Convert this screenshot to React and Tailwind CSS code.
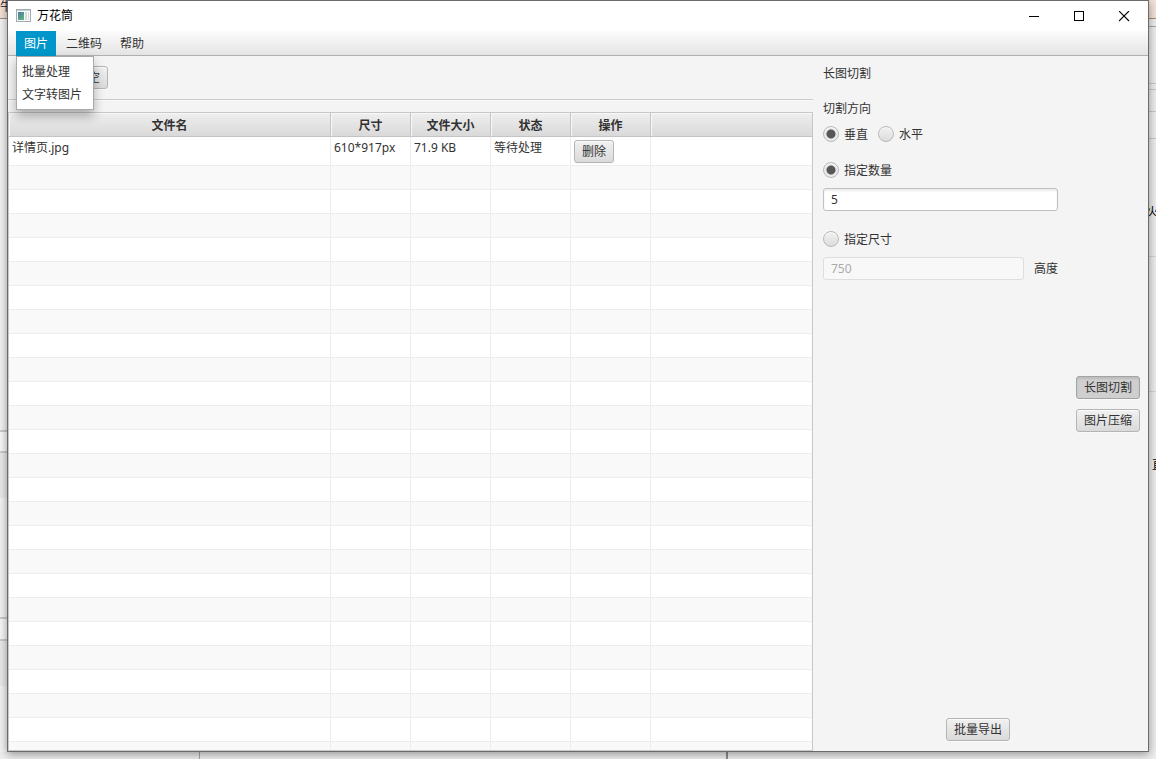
import { useState } from "react";

const btn =
  "h-[23px] rounded-[3px] border border-[#b5b5b5] bg-linear-to-b from-[#f1f1f1] to-[#dadada] px-[7px] text-[12px] leading-[21px] text-[#323232] shadow-[inset_0_1px_0_#fbfbfb,0_1px_0_#fafafa] whitespace-nowrap";
const pressed =
  "h-[23px] rounded-[3px] border border-[#a3a3a3] bg-[#cfcfcf] px-[7px] text-[12px] leading-[21px] text-[#323232] shadow-[inset_0_2px_2px_#bdbdbd,0_1px_0_#fafafa] whitespace-nowrap";
const radio =
  "size-4 shrink-0 appearance-none rounded-full border border-[#b9b9b9] bg-linear-to-b from-[#f2f2f2] to-[#dcdcdc] shadow-[inset_0_1px_0_#fafafa] checked:bg-[radial-gradient(circle,#575757_0_4px,#e9e9e9_5px)]";
const radioLabel = "flex h-4 items-center gap-[5px] leading-4";
const cell = "border-r border-b border-[#ededed] p-0 pt-[2px] pl-[3px] align-top";

const columns = ["文件名", "尺寸", "文件大小", "状态", "操作", ""];
const files = [{ name: "详情页.jpg", size: "610*917px", bytes: "71.9 KB", state: "等待处理" }];
const blankRows = Array.from({ length: 25 }, (_, i) => i);

function TitleBar() {
  return (
    <header className="flex h-[30px] shrink-0 items-center bg-white pr-px pl-2">
      <svg width="16" height="14" viewBox="0 0 16 14" aria-hidden="true">
        <defs>
          <linearGradient id="pane" x1="0" y1="0" x2="0.6" y2="1">
            <stop offset="0" stopColor="#4a78a8" />
            <stop offset="1" stopColor="#5fae80" />
          </linearGradient>
        </defs>
        <rect x="0.5" y="0.5" width="14" height="12" fill="#fafbfb" stroke="#a3abb0" />
        <rect x="1" y="1" width="13" height="1" fill="#c9d1d5" />
        <rect x="2" y="3" width="6" height="8" fill="url(#pane)" />
        <rect x="9" y="3" width="2" height="8" fill="#d5dddd" />
        <rect x="12" y="3" width="1" height="8" fill="#d5dddd" />
      </svg>
      <h1 className="ml-[5px] flex-1 text-[12px] text-black">万花筒</h1>
      <button aria-label="Minimize" className="flex h-full w-[45px] items-center justify-center">
        <svg width="11" height="11" viewBox="0 0 11 11" shapeRendering="crispEdges"><path d="M0 5.5h10" stroke="#000" /></svg>
      </button>
      <button aria-label="Maximize" className="flex h-full w-[45px] items-center justify-center">
        <svg width="11" height="11" viewBox="0 0 11 11" shapeRendering="crispEdges"><rect x="0.5" y="0.5" width="9" height="9" fill="none" stroke="#000" /></svg>
      </button>
      <button aria-label="Close" className="flex h-full w-[45px] items-center justify-center">
        <svg width="11" height="11" viewBox="0 0 11 11"><path d="M0 0l10 10M10 0L0 10" stroke="#000" strokeWidth="1.1" /></svg>
      </button>
    </header>
  );
}

function MenuBar() {
  return (
    <nav className="flex h-[25px] shrink-0 border-b border-[#b0b0b0] bg-linear-to-b from-[#fcfcfc] to-[#e4e4e4] pl-2">
      <div className="relative">
        <button className="h-[25px] bg-[#0096c9] px-2 text-white">图片</button>
        <ul className="absolute top-[25px] left-0 z-10 h-[54px] w-[78px] border border-[#a9a9a9] bg-white pt-[3px] text-[#323232] shadow-[0_6px_10px_rgba(0,0,0,0.3)]">
          <li><button className="h-[23px] w-full pl-[5px] text-left whitespace-nowrap">批量处理</button></li>
          <li><button className="h-[23px] w-full pl-[5px] text-left whitespace-nowrap">文字转图片</button></li>
        </ul>
      </div>
      <button className="ml-[2px] h-[25px] px-2">二维码</button>
      <button className="ml-[2px] h-[25px] px-2">帮助</button>
    </nav>
  );
}

function FileTable() {
  return (
    <div className="min-h-0 flex-1 overflow-hidden border border-[#c8c8c8] bg-white">
      <table className="w-full table-fixed border-separate border-spacing-0">
        <colgroup>
          <col className="w-[322px]" />
          <col className="w-[80px]" />
          <col className="w-[80px]" />
          <col className="w-[80px]" />
          <col className="w-[80px]" />
          <col />
        </colgroup>
        <thead>
          <tr className="h-6">
            {columns.map((c, i) => (
              <th key={i} className="border-r border-b border-[#c4c4c4] bg-linear-to-b from-[#efefef] to-[#d9d9d9] p-0 pt-[2px] font-bold shadow-[inset_1px_1px_0_#f8f8f8] last:border-r-0">
                {c}
              </th>
            ))}
          </tr>
        </thead>
        <tbody>
          {files.map((f) => (
            <tr key={f.name} className="h-[29px]">
              <td className={cell}>{f.name}</td>
              <td className={cell}>{f.size}</td>
              <td className={cell}>{f.bytes}</td>
              <td className={cell}>{f.state}</td>
              <td className="border-r border-b border-[#ededed] p-0 pl-[3px] align-middle">
                <button className={`${btn} block`}>删除</button>
              </td>
              <td className="border-b border-[#ededed] p-0" />
            </tr>
          ))}
          {blankRows.map((r) => (
            <tr key={r} className="h-6 odd:bg-white even:bg-[#f9f9f9]">
              {columns.map((_, i) => (
                <td key={i} className="border-r border-b border-[#ededed] p-0 last:border-r-0" />
              ))}
            </tr>
          ))}
        </tbody>
      </table>
    </div>
  );
}

function SettingsPanel() {
  const [direction, setDirection] = useState("v");
  const [mode, setMode] = useState("count");
  const [count, setCount] = useState("5");
  const [size, setSize] = useState("750");
  return (
    <aside className="flex w-[335px] shrink-0">
      <div className="flex flex-1 flex-col pl-[10px]">
        <h2 className="mt-[9px] leading-[18px]">长图切割</h2>
        <fieldset className="mt-[17px]">
          <legend className="leading-[18px]">切割方向</legend>
          <div className="mt-2 flex gap-[10px]">
            <label className={radioLabel}>
              <input type="radio" name="direction" className={radio} checked={direction === "v"} onChange={() => setDirection("v")} />
              <span className="pt-px">垂直</span>
            </label>
            <label className={radioLabel}>
              <input type="radio" name="direction" className={radio} checked={direction === "h"} onChange={() => setDirection("h")} />
              <span className="pt-px">水平</span>
            </label>
          </div>
        </fieldset>
        <label className={`${radioLabel} mt-5`}>
          <input type="radio" name="mode" className={radio} checked={mode === "count"} onChange={() => setMode("count")} />
          <span className="pt-px">指定数量</span>
        </label>
        <input
          aria-label="指定数量"
          className="mt-[10px] h-[23px] w-[235px] rounded-[3px] border border-[#c0c0c0] bg-white px-[7px] shadow-[inset_0_2px_2px_#ededed] outline-none"
          value={count}
          onChange={(e) => setCount(e.target.value)}
        />
        <label className={`${radioLabel} mt-5`}>
          <input type="radio" name="mode" className={radio} checked={mode === "size"} onChange={() => setMode("size")} />
          <span className="pt-px">指定尺寸</span>
        </label>
        <div className="mt-[10px] flex items-center gap-[10px]">
          <input
            id="height"
            className="h-[23px] w-[201px] rounded-[3px] border border-[#c0c0c0] bg-white px-[7px] outline-none disabled:border-[#dedede] disabled:bg-[#f8f8f8] disabled:text-[#aaaaaa]"
            value={size}
            disabled={mode !== "size"}
            onChange={(e) => setSize(e.target.value)}
          />
          <label htmlFor="height" className="whitespace-nowrap">高度</label>
        </div>
        <div className="mt-auto flex justify-center pb-[10px] pl-[57px]">
          <button className={btn}>批量导出</button>
        </div>
      </div>
      <div className="flex w-[72px] flex-col justify-center gap-[10px] pr-2">
        <button className={pressed} aria-pressed="true">长图切割</button>
        <button className={btn} aria-pressed="false">图片压缩</button>
      </div>
    </aside>
  );
}

export default function App() {
  return (
    <div className="flex h-screen flex-col overflow-hidden bg-[#eeeeee] font-['Noto_Sans','Noto_Sans_CJK_SC',sans-serif] text-[12px] leading-[18px] text-[#323232]">
      <div className="flex min-h-0 flex-1">
        <div className="flex w-[7px] shrink-0 flex-col overflow-hidden">
          <div className="h-[19px] shrink-0 border-b border-[#a08c7c] bg-[#f3e2d6] leading-[14px] text-[#2a1830]">牛</div>
          <div className="h-[411px] shrink-0 bg-[#f4f4f4]" />
          <div className="h-[23px] shrink-0 border-y-2 border-[#cccccc] bg-[#f8f8f8]" />
          <div className="h-[45px] shrink-0 bg-[#ebebeb]" />
          <div className="h-[119px] shrink-0 bg-[#f4f4f4]" />
          <div className="h-[24px] shrink-0 border-y-2 border-[#cccccc] bg-[#f8f8f8]" />
          <div className="h-[45px] shrink-0 bg-[#ebebeb]" />
          <div className="flex-1 bg-[#f4f4f4]" />
        </div>
        <main className="z-10 flex min-w-0 flex-1 flex-col border border-[#6b6b6b] bg-[#f4f4f4] shadow-[0_2px_9px_rgba(0,0,0,0.4)]">
          <TitleBar />
          <MenuBar />
          <div className="flex min-h-0 flex-1">
            <div className="flex min-w-0 flex-1 flex-col">
              <div className="flex h-11 shrink-0 items-center border-b border-[#cacaca] pl-[60px]">
                <button className={btn}>清空</button>
              </div>
              <div className="h-3 shrink-0 border-t border-[#fafafa]" />
              <FileTable />
            </div>
            <SettingsPanel />
          </div>
        </main>
        <div className="flex w-[7px] shrink-0 flex-col overflow-hidden">
          <div className="h-[19px] shrink-0 border-b border-[#a08c7c] bg-[#f3e2d6]" />
          <div className="h-2 shrink-0 border-b border-[#a8a8a8]" />
          <div className="h-[57px] shrink-0 border-b border-[#c8c8c8]" />
          <div className="h-[6px] shrink-0 border-b border-[#c8c8c8]" />
          <div className="h-[22px] shrink-0 border-b border-[#c8c8c8]" />
          <div className="h-[27px] shrink-0 border-b border-[#c8c8c8]" />
          <div className="flex h-[118px] shrink-0 justify-center border-b border-[#d5d5d5] pt-[64px] text-black">
            <span className="shrink-0">火</span>
          </div>
          <div className="h-[135px] shrink-0 border-b border-[#d5d5d5]" />
          <div className="flex-1 pt-[64px] pl-[3px] text-black">直</div>
        </div>
      </div>
      <div className="flex h-[7px] shrink-0">
        <div className="w-[200px] border-r border-[#a8a8a8]" />
        <div className="w-[528px] border-r-2 border-[#8d8d8d]" />
      </div>
    </div>
  );
}
